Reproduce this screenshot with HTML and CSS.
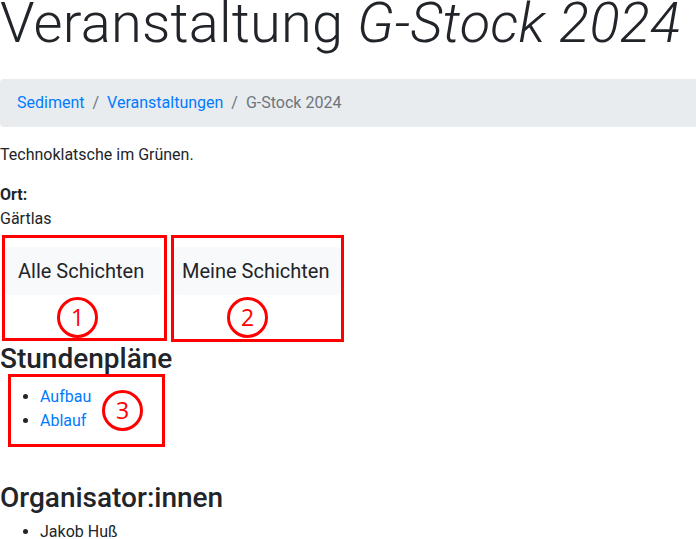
FILE: index.html
```html
<!DOCTYPE html>
<html lang="de">
<head>
<meta charset="utf-8">
<title>Veranstaltung G-Stock 2024</title>
<link rel="stylesheet" href="styles.css">
</head>
<body>
<main class="page">
  <h1 class="title">Veranstaltung <em>G-Stock 2024</em></h1>
  <nav class="breadcrumb">
    <a href="#">Sediment</a>
    <span class="sep">/</span>
    <a href="#">Veranstaltungen</a>
    <span class="sep">/</span>
    <span class="active">G-Stock 2024</span>
  </nav>
  <p class="desc">Technoklatsche im Grünen.</p>
  <dl class="info">
    <dt>Ort:</dt>
    <dd>Gärtlas</dd>
  </dl>
  <div class="tabs">
    <a class="tab tab-all" href="#">Alle Schichten</a>
    <a class="tab tab-mine" href="#">Meine Schichten</a>
  </div>
  <h2 class="section section-plans">Stundenpläne</h2>
  <ul class="list">
    <li><a href="#">Aufbau</a></li>
    <li><a href="#">Ablauf</a></li>
  </ul>
  <h2 class="section section-orga">Organisator:innen</h2>
  <ul class="list">
    <li>Jakob Huß</li>
  </ul>

  <div class="mark mark-box box-1"></div>
  <div class="mark mark-box box-2"></div>
  <div class="mark mark-box box-3"></div>
  <div class="mark mark-num num-1">1</div>
  <div class="mark mark-num num-2">2</div>
  <div class="mark mark-num num-3">3</div>
</main>
</body>
</html>
```
FILE: styles.css
```css
html, body {
  margin: 0;
  padding: 0;
  overflow: hidden;
}
body {
  font-family: Roboto, "Liberation Sans", sans-serif;
  font-size: 16px;
  line-height: 24px;
  color: #212529;
  background: #fff;
}
a {
  color: #007bff;
  text-decoration: none;
}
.page {
  position: relative;
  display: flow-root;
  width: 710px;
}
.title {
  font-size: 56px;
  font-weight: 300;
  line-height: 1.2;
  letter-spacing: 0.2px;
  margin: -10px 0 22px;
  white-space: nowrap;
}
.title em {
  font-style: italic;
}
.breadcrumb {
  display: flex;
  align-items: center;
  background: #e9ecef;
  border-radius: 4px;
  padding: 12px 16px 12px 17px;
  margin: 0 0 16px;
}
.breadcrumb .sep {
  color: #6c757d;
  padding: 0 8px;
}
.breadcrumb .active {
  color: #6c757d;
}
.desc {
  margin: 0 0 16px;
}
.info {
  margin: 0 0 16px;
}
.info dt {
  font-weight: 700;
}
.info dd {
  margin: 0;
}
.tabs {
  display: flex;
  gap: 14px;
  padding-left: 5px;
}
.tab {
  display: block;
  box-sizing: border-box;
  background: #f8f9fa;
  border-radius: 4px;
  color: #212529;
  font-size: 20px;
  line-height: 24px;
  padding: 12px 0;
}
.tab-all { width: 156px; padding-left: 13px; }
.tab-mine { width: 166px; padding-left: 7px; }
.section {
  font-size: 28px;
  font-weight: 500;
  line-height: 1.2;
  margin: 0 0 9px;
}
.section-plans {
  margin-top: 47px;
}
.section-orga {
  margin-top: 48px;
  margin-bottom: 6px;
}
.list {
  margin: 0 0 16px;
  padding-left: 40px;
}
.mark {
  position: absolute;
  box-sizing: border-box;
}
.mark-box {
  border: 3px solid #f00;
}
.box-1 { left: 2px; top: 235px; width: 165px; height: 106px; }
.box-2 { left: 171px; top: 235px; width: 173px; height: 107px; }
.box-3 { left: 8px; top: 374px; width: 157px; height: 73px; }
.mark-num {
  width: 41px;
  height: 41px;
  border: 3px solid #f00;
  border-radius: 50%;
  color: #f00;
  font-family: "Open Sans", sans-serif;
  font-size: 23px;
  line-height: 35px;
  text-align: center;
}
.num-1 { left: 57px; top: 297px; }
.num-2 { left: 227px; top: 297px; }
.num-3 { left: 102px; top: 390px; }
```
